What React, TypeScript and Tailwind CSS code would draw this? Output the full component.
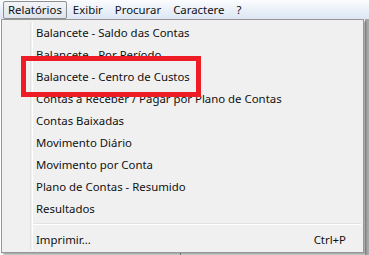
import React from "react";

const items = [
  "Balancete - Saldo das Contas",
  "Balancete - Por Período",
  "Balancete - Centro de Custos",
  "Contas a Receber / Pagar por Plano de Contas",
  "Contas Baixadas",
  "Movimento Diário",
  "Movimento por Conta",
  "Plano de Contas - Resumido",
  "Resultados",
];

const menus = ["Exibir", "Procurar", "Caractere", "?"];

export default function App() {
  return (
    <div
      className="relative w-[369px] h-[255px] overflow-hidden bg-white text-[11.4px] text-[#111]"
      style={{ fontFamily: '"Noto Sans", "Liberation Sans", sans-serif' }}
    >
      {/* menubar */}
      <div className="flex h-[19px] items-center bg-gradient-to-b from-[#fbfcfe] to-[#dce6f4] pl-[3px]">
        <div className="flex h-[18px] items-center rounded-[2px] border border-[#8e8f8f] bg-gradient-to-b from-[#f2f4f8] to-[#dfe4ec] px-[4px] leading-none">
          Relatórios
        </div>
        {menus.map((m) => (
          <div key={m} className="px-[6px] leading-none">
            {m}
          </div>
        ))}
      </div>

      {/* window content behind the menu */}
      <div className="flex h-[236px]">
        <div className="w-[181px] border-r border-[#a0a0a0]" />
        <div className="flex-1" />
        <div className="w-[4px] bg-[#a9a9a9]" />
      </div>

      {/* dropdown */}
      <div className="absolute left-[1px] top-[19px] w-[363px] border border-[#979797] bg-[#f0f0f0] py-[2px] shadow-[2px_2px_2px_rgba(0,0,0,0.35)]">
        <div className="absolute left-[28px] top-[2px] bottom-[2px] w-[2px] border-l border-[#e2e3e3] shadow-[1px_0_0_#ffffff]" />
        {items.map((t) => (
          <div key={t} className="flex h-[22px] items-center pl-[34px]">
            {t}
          </div>
        ))}
        <div className="flex h-[8px] items-center pl-[30px] pr-[2px]">
          <div className="h-[2px] w-full border-t border-[#e2e3e3] bg-white" />
        </div>
        <div className="flex h-[22px] items-center justify-between pl-[34px] pr-[17px] pt-[1px]">
          <span>Imprimir...</span>
          <span>Ctrl+P</span>
        </div>

        {/* highlight box */}
        <div className="absolute left-[19px] top-[36px] h-[41px] w-[180px] border-[5px] border-[#ee1c25]" />
      </div>
    </div>
  );
}
